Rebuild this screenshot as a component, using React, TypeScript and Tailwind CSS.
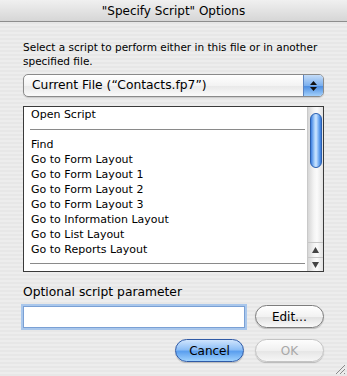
const FONT = "font-['Lucida_Grande','DejaVu_Sans',sans-serif]";

const SCRIPTS: (string | null)[] = [
  "Open Script",
  null,
  "Find",
  "Go to Form Layout",
  "Go to Form Layout 1",
  "Go to Form Layout 2",
  "Go to Form Layout 3",
  "Go to Information Layout",
  "Go to List Layout",
  "Go to Reports Layout",
  null,
];

function AquaButton({ label, variant = "plain" }: { label: string; variant?: "plain" | "default" | "disabled" }) {
  const skin =
    variant === "default"
      ? "border-[#2f5aa6] bg-[linear-gradient(#cfe4fd_0%,#8ebff6_45%,#5b9fef_55%,#9fd2fd_100%)] text-black"
      : variant === "disabled"
        ? "border-[#c4c4c4] bg-[linear-gradient(#fdfdfd,#f0f0f0_50%,#e6e6e6_55%,#f6f6f6)] text-[#a8a8a8]"
        : "border-[#7d7d7d] bg-[linear-gradient(#ffffff,#f2f2f2_50%,#e2e2e2_55%,#f9f9f9)] text-black";
  return (
    <div
      className={`flex h-[23px] w-[69px] items-center justify-center rounded-full border text-[12px] shadow-[0_1px_1px_rgba(0,0,0,0.2)] ${skin}`}
    >
      {label}
    </div>
  );
}

export default function App() {
  return (
    <div className={`relative h-[376px] w-[347px] overflow-hidden bg-[repeating-linear-gradient(#ededed_0px,#ededed_2px,#e7e7e7_2px,#e7e7e7_4px)] ${FONT}`}>
      {/* title bar */}
      <div className="flex h-[22px] items-center justify-center border-b border-[#8e8e8e] bg-[linear-gradient(#f0f0f0,#d6d6d6)] text-[12px] text-black">
        "Specify Script" Options
      </div>

      <div className="flex flex-col px-[23px] pt-[18px]">
        <p className="text-[10.5px] leading-[14px] text-black">
          Select a script to perform either in this file or in another specified file.
        </p>

        {/* popup */}
        <div className="mt-[6px] flex h-[23px] items-stretch overflow-hidden rounded-[5px] border border-[#8a8a8a] bg-[linear-gradient(#ffffff,#f3f3f3_50%,#e9e9e9_55%,#fafafa)] shadow-[0_1px_1px_rgba(0,0,0,0.15)]">
          <div className="flex flex-1 items-center pl-[8px] text-[12.3px] text-black">Current File (“Contacts.fp7”)</div>
          <div className="flex w-[20px] flex-col items-center justify-center gap-[2px] border-l border-[#5c84c0] bg-[linear-gradient(#c4dcf8,#7cb0ee_50%,#4e8fe2_55%,#a3d0fb)]">
            <svg width="7" height="4" viewBox="0 0 7 4"><path d="M3.5 0L7 4H0z" fill="#111" /></svg>
            <svg width="7" height="4" viewBox="0 0 7 4"><path d="M0 0h7L3.5 4z" fill="#111" /></svg>
          </div>
        </div>

        {/* script list */}
        <div className="mt-[9px] flex h-[166px] border border-[#3a3a3a] bg-white">
          <div className="flex flex-1 flex-col pl-[6px] pr-[2px] text-[11px] text-black">
            {SCRIPTS.map((s, i) =>
              s === null ? (
                <div key={i} className="flex h-[15px] items-center">
                  <div className="h-px w-full bg-[#8a8a8a]" />
                </div>
              ) : (
                <div key={i} className="flex h-[15px] items-center pl-[1px] leading-[15px]">
                  {s}
                </div>
              )
            )}
          </div>
          {/* scrollbar */}
          <div className="flex w-[16px] flex-col border-l border-[#c9c9c9] bg-[linear-gradient(90deg,#d6d6d6,#f4f4f4_40%,#fbfbfb_60%,#e2e2e2)]">
            <div className="flex flex-1 justify-center pt-[6px]">
              <div className="h-[55px] w-[12px] rounded-full border border-[#2a5fb0] bg-[linear-gradient(90deg,#3d7fe0,#a8d0fb_35%,#cfe6ff_50%,#6aa6f0_80%,#3677d8)]" />
            </div>
            <div className="flex h-[15px] items-center justify-center border-t border-[#c6c6c6]">
              <svg width="7" height="6" viewBox="0 0 7 6"><path d="M3.5 0L7 6H0z" fill="#444" /></svg>
            </div>
            <div className="flex h-[14px] items-center justify-center border-t border-[#c6c6c6]">
              <svg width="7" height="6" viewBox="0 0 7 6"><path d="M0 0h7L3.5 6z" fill="#444" /></svg>
            </div>
          </div>
        </div>

        <p className="mt-[13px] text-[12.3px] leading-[15px] text-black">Optional script parameter</p>

        <div className="mt-[5px] flex items-center gap-[10px]">
          <div className="h-[22px] flex-1 border border-[#7aa0d4] bg-white shadow-[0_0_0_2px_#a9c7ec]" />
          <AquaButton label="Edit…" />
        </div>

        <div className="mt-[11px] flex justify-end gap-[11px]">
          <AquaButton label="Cancel" variant="default" />
          <AquaButton label="OK" variant="disabled" />
        </div>
      </div>

      {/* resize grip */}
      <svg className="absolute bottom-[1px] right-[1px]" width="12" height="12" viewBox="0 0 12 12">
        <path d="M11 2L2 11M11 6L6 11M11 10L10 11" stroke="#8a8a8a" strokeWidth="1" />
      </svg>
    </div>
  );
}
